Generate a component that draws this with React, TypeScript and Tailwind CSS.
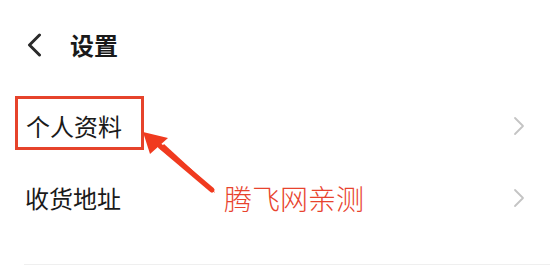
import React from "react";

const font = { fontFamily: '"Noto Sans CJK SC", "Noto Sans", sans-serif' };

function ChevronRight() {
  return (
    <svg width="14" height="20" viewBox="0 0 14 20" fill="none">
      <path d="M3 2 L11 10 L3 18" stroke="#c4c4c4" strokeWidth="1.8" strokeLinecap="round" strokeLinejoin="round" />
    </svg>
  );
}

export default function App() {
  return (
    <div className="relative w-[550px] h-[275px] bg-white overflow-hidden text-[#1a1a1a]" style={font}>
      <div className="h-[90px] flex items-center pl-[27px]">
        <svg width="15" height="24" viewBox="0 0 15 24" fill="none">
          <path d="M12.5 2 L2.5 12 L12.5 22" stroke="#2a2a2a" strokeWidth="3" strokeLinecap="round" strokeLinejoin="round" />
        </svg>
        <span className="ml-[28px] text-[24px] font-bold leading-none">设置</span>
      </div>
      <div className="h-[72px] flex items-center justify-between pl-[26px] pr-[24px]">
        <span className="relative text-[24px] leading-none">
          个人资料
          <span className="absolute left-[-11px] right-[-22px] top-[-18px] bottom-[-12px] border-[3px] border-[#e6432b]" />
        </span>
        <ChevronRight />
      </div>
      <div className="h-[72px] flex items-center justify-between pl-[25px] pr-[24px]">
        <span className="text-[24px] leading-none">收货地址</span>
        <ChevronRight />
      </div>
      <div className="ml-[24px] mt-[30px] h-px bg-[#efefef]" />
      <span className="absolute left-[224px] top-[184px] text-[28px] font-light leading-none text-[#e8432e]">腾飞网亲测</span>
      <svg className="absolute left-0 top-0" width="550" height="275" viewBox="0 0 550 275">
        <polygon points="213,189 215,193 160,149 164,144" fill="#f03a1f" />
        <line x1="212" y1="190" x2="160" y2="146" stroke="#f03a1f" strokeWidth="5" strokeLinecap="round" />
        <polygon points="143,132 168,138 150,154" fill="#f03a1f" />
      </svg>
    </div>
  );
}
